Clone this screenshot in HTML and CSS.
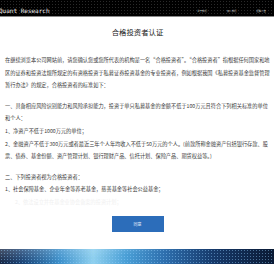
FILE: index.html
```html
<!DOCTYPE html>
<html lang="zh-CN">
<head>
<meta charset="utf-8">
<title>合格投资者认证</title>
<link rel="stylesheet" href="styles.css">
</head>
<body>
<header class="topbar">
  <div class="brand">Quant Research</div>
  <nav class="nav">
    <a class="nav-item">关于我们</a>
    <a class="nav-item">加入我们</a>
    <a class="nav-item">招聘公告</a>
  </nav>
</header>
<main class="modal">
  <h1 class="title">合格投资者认证</h1>
  <div class="content">
    <p class="para">在继续浏览本公司网站前，请您确认您或您所代表的机构是一名“合格投资者”。“合格投资者”指根据任何国家和地区的证券和投资法规所规定的有资格投资于私募证券投资基金的专业投资者，例如根据我国《私募投资基金监督管理暂行办法》的规定，合格投资者的标准如下：</p>
    <p class="para">一、具备相应风险识别能力和风险承担能力，投资于单只私募基金的金额不低于100万元且符合下列相关标准的单位和个人：<br>1、净资产不低于1000万元的单位；<br>2、金融资产不低于300万元或者最近三年个人年均收入不低于50万元的个人。(前款所称金融资产包括银行存款、股票、债券、基金份额、资产管理计划、银行理财产品、信托计划、保险产品、期货权益等。)</p>
    <p class="para">二、下列投资者视为合格投资者：<br>1、社会保障基金、企业年金等养老基金，慈善基金等社会公益基金；<br><span class="fade">2、依法设立并在基金业协会备案的投资计划；</span></p>
  </div>
  <div class="actions">
    <button class="agree">同意</button>
  </div>
</main>
<footer class="banner"></footer>
</body>
</html>
```
FILE: styles.css
```css
html, body {
  margin: 0;
  padding: 0;
  background: #fff;
}
body {
  width: 274px;
  overflow: hidden;
  font-family: "Noto Sans CJK SC", "Noto Sans", sans-serif;
  color: #333;
}
.topbar {
  height: 17px;
  border-bottom: 1px solid #8a8a8a;
  background-color: #000;
  background-image: radial-gradient(circle, #2a2a2a 0.6px, transparent 0.9px);
  background-size: 3px 3px;
  display: flex;
  align-items: flex-end;
  justify-content: space-between;
  padding-bottom: 2px;
  box-sizing: border-box;
}
.brand {
  font-family: "DejaVu Sans Mono", "Liberation Mono", monospace;
  font-size: 6px;
  line-height: 7px;
  color: #f2f2f2;
  margin-left: -1px;
}
.nav {
  display: flex;
  gap: 20px;
  margin-right: 8px;
  padding-bottom: 1px;
}
.nav-item {
  font-size: 2.4px;
  line-height: 4px;
  color: #d8d8d8;
}
.modal {
  padding: 0 4px 0 5px;
}
.title {
  margin: 10px 0 0;
  font-size: 7.4px;
  line-height: 10px;
  font-weight: 400;
  text-align: center;
  color: #222;
}
.content {
  margin-top: 17px;
}
.para {
  margin: 0 0 7.5px;
  font-size: 5.2px;
  line-height: 12.7px;
  color: #3a3a3a;
}
.fade {
  color: #f0f0f0;
  padding-left: 10px;
}
.actions {
  display: flex;
  justify-content: center;
  margin-top: 2px;
}
.agree {
  width: 52px;
  height: 16px;
  border: none;
  border-radius: 0;
  background: #2c6dba;
  color: #e8f0fa;
  font-family: "Noto Sans CJK SC", sans-serif;
  font-size: 4px;
  padding: 0;
}
.banner {
  margin-top: 17px;
  height: 19px;
  background-image:
    radial-gradient(circle, rgba(150, 210, 255, 0.45) 0.6px, transparent 1px),
    linear-gradient(175deg, rgba(255,255,255,0.25) 0%, rgba(255,255,255,0) 40%),
    linear-gradient(to right, #0b1c3c 0%, #163f72 8%, #3f92cc 22%, #8fd0ee 34%, #4a9fd6 46%, #2e6fae 60%, #16396a 78%, #0a1a34 100%);
  background-size: 3px 3px, 100% 100%, 100% 100%;
}
```
